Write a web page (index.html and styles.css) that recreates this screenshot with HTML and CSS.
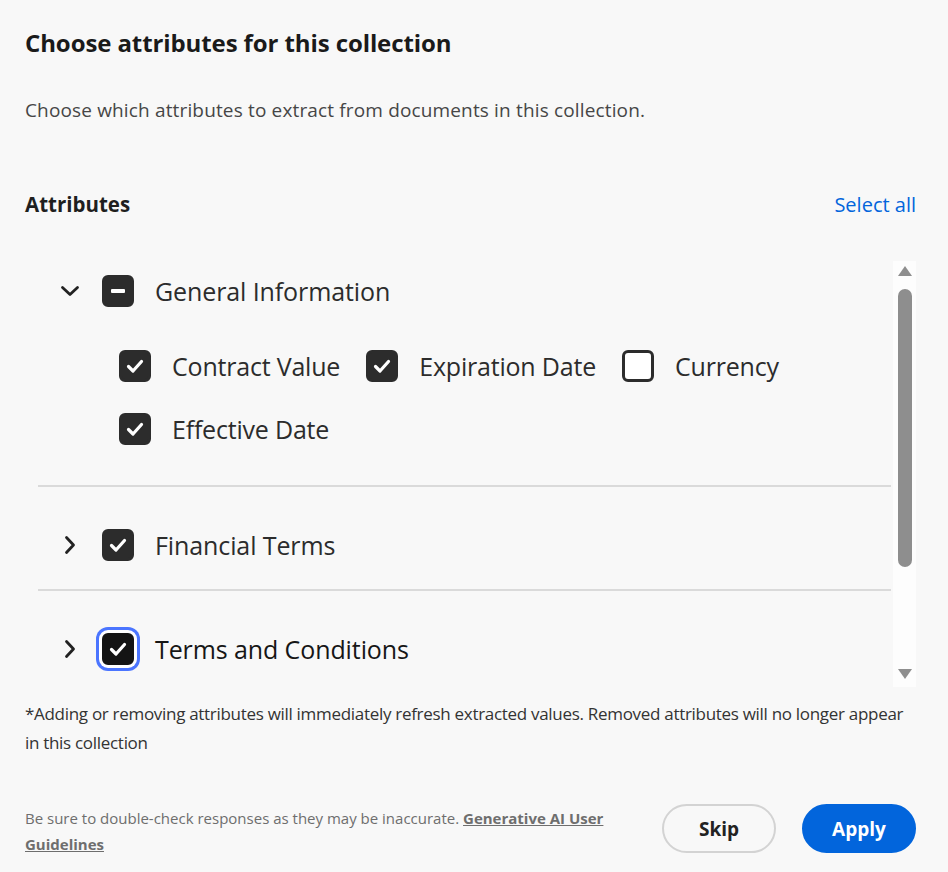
FILE: index.html
```html
<!DOCTYPE html>
<html lang="en">
<head>
  <meta charset="UTF-8">
  <meta name="viewport" content="width=device-width, initial-scale=1.0">
  <title>Choose attributes</title>
  <link rel="stylesheet" href="styles.css">
</head>
<body>
  <main class="dialog">
    <h1 class="dialog-title">Choose attributes for this collection</h1>
    <p class="dialog-desc">Choose which attributes to extract from documents in this collection.</p>

    <div class="attr-head">
      <h2>Attributes</h2>
      <a class="select-all" href="#">Select all</a>
    </div>

    <div class="attr-box">
      <div class="attr-list">
        <section class="group open">
          <div class="group-head">
            <span class="chevron">
              <svg viewBox="0 0 20 20" width="20" height="20"><path d="M2.5 6.5 L10 13.5 L17.5 6.5" /></svg>
            </span>
            <span class="check mixed"><i></i></span>
            <span class="group-name">General Information</span>
          </div>
          <div class="group-items">
            <label class="item"><span class="check on"><svg viewBox="0 0 32 32"><path d="M9.5 16.5 L14 21 L22.5 11.5" /></svg></span>Contract Value</label>
            <label class="item"><span class="check on"><svg viewBox="0 0 32 32"><path d="M9.5 16.5 L14 21 L22.5 11.5" /></svg></span>Expiration Date</label>
            <label class="item"><span class="check"></span>Currency</label>
            <label class="item"><span class="check on"><svg viewBox="0 0 32 32"><path d="M9.5 16.5 L14 21 L22.5 11.5" /></svg></span>Effective Date</label>
          </div>
        </section>
        <section class="group">
          <div class="group-head">
            <span class="chevron">
              <svg viewBox="0 0 20 20" width="20" height="20"><path d="M6.5 2.5 L13.5 10 L6.5 17.5" /></svg>
            </span>
            <span class="check on"><svg viewBox="0 0 32 32"><path d="M9.5 16.5 L14 21 L22.5 11.5" /></svg></span>
            <span class="group-name">Financial Terms</span>
          </div>
        </section>
        <section class="group">
          <div class="group-head">
            <span class="chevron">
              <svg viewBox="0 0 20 20" width="20" height="20"><path d="M6.5 2.5 L13.5 10 L6.5 17.5" /></svg>
            </span>
            <span class="check on focus"><svg viewBox="0 0 32 32"><path d="M9.5 16.5 L14 21 L22.5 11.5" /></svg></span>
            <span class="group-name dark">Terms and Conditions</span>
          </div>
        </section>
      </div>
      <div class="scrollbar">
        <span class="arrow up"></span>
        <span class="track"><span class="thumb"></span></span>
        <span class="arrow down"></span>
      </div>
    </div>

    <p class="note">*Adding or removing attributes will immediately refresh extracted values. Removed attributes will no longer appear in this collection</p>

    <footer class="dialog-foot">
      <p class="disclaimer">Be sure to double-check responses as they may be inaccurate. <a href="#">Generative AI User Guidelines</a></p>
      <div class="buttons">
        <button class="btn btn-secondary">Skip</button>
        <button class="btn btn-primary">Apply</button>
      </div>
    </footer>
  </main>
</body>
</html>
```

FILE: styles.css
```css
html, body {
  margin: 0;
  background: #f8f8f8;
}
body {
  font-family: "Open Sans", "Noto Sans", sans-serif;
  color: #222;
}
.dialog {
  padding: 27px 32px 0 25px;
}
.dialog-title {
  margin: 0;
  font-size: 24px;
  line-height: 32px;
  font-weight: 700;
  color: #1a1a1a;
  letter-spacing: -0.1px;
}
.dialog-desc {
  margin: 38px 0 0;
  font-size: 19px;
  line-height: 26px;
  color: #464646;
  letter-spacing: 0.15px;
}
.attr-head {
  display: flex;
  justify-content: space-between;
  align-items: center;
  margin-top: 66px;
  height: 30px;
}
.attr-head h2 {
  margin: 0;
  font-size: 20.5px;
  font-weight: 700;
  color: #1f1f1f;
}
.select-all {
  color: #0265dc;
  text-decoration: none;
  font-size: 20px;
}

/* list with its own scrollbar */
.attr-box {
  display: flex;
  height: 426px;
  margin-top: 42px;
  overflow: hidden;
}
.attr-list {
  flex: 1;
  padding-left: 13px;
}
.group {
  padding: 28px 0 14px;
  border-bottom: 2px solid #dadada;
}
.group:first-child {
  padding-top: 0;
}
.group:last-child {
  border-bottom: 0;
}
.group-head {
  display: flex;
  align-items: center;
  height: 60px;
  padding-left: 22px;
}
.chevron {
  display: flex;
  width: 20px;
  height: 20px;
  margin-right: 22px;
}
.chevron path {
  fill: none;
  stroke: #222;
  stroke-width: 2.8;
  stroke-linecap: round;
  stroke-linejoin: round;
}
.group-name {
  margin-left: 21px;
  font-size: 25px;
  letter-spacing: -0.1px;
  color: #2c2c2c;
}
.group-name.dark {
  color: #161616;
}
.group-items {
  display: flex;
  flex-wrap: wrap;
  gap: 19px 26px;
  padding: 23px 0 20px 81px;
}
.item {
  display: flex;
  align-items: center;
  height: 44px;
  font-size: 25px;
  letter-spacing: -0.2px;
  color: #2c2c2c;
}
.item .check {
  margin-right: 21px;
}

.check {
  display: flex;
  align-items: center;
  justify-content: center;
  box-sizing: border-box;
  width: 32px;
  height: 32px;
  flex-shrink: 0;
  border: 3px solid #2c2c2c;
  border-radius: 6px;
  background: #fff;
}
.check.on,
.check.mixed {
  background: #2c2c2c;
}
.check svg {
  width: 32px;
  height: 32px;
  flex-shrink: 0;
}
.check path {
  fill: none;
  stroke: #fff;
  stroke-width: 3.2;
  stroke-linecap: round;
  stroke-linejoin: round;
}
.check.mixed i {
  display: block;
  width: 14px;
  height: 4px;
  border-radius: 1px;
  background: #fff;
}
.check.focus {
  background: #141414;
  border-color: #141414;
  box-shadow: 0 0 0 3px #fff, 0 0 0 6px #4b75ff;
}

.scrollbar {
  display: flex;
  flex-direction: column;
  align-items: center;
  width: 23px;
  margin-left: 2px;
  background: #fdfdfd;
}
.arrow {
  width: 0;
  height: 0;
  border-left: 7px solid transparent;
  border-right: 7px solid transparent;
}
.arrow.up {
  margin-top: 5px;
  border-bottom: 10px solid #8e8e8e;
}
.arrow.down {
  margin-bottom: 8px;
  border-top: 10px solid #8e8e8e;
}
.track {
  flex: 1;
  width: 14px;
  padding-top: 13px;
}
.thumb {
  display: block;
  height: 278px;
  border-radius: 7px;
  background: #8e8e8e;
}

.note {
  margin: 12px 0 0;
  max-height: 51px;
  overflow: hidden;
  font-size: 17px;
  line-height: 29px;
  color: #333;
  letter-spacing: -0.3px;
}

.dialog-foot {
  display: flex;
  align-items: flex-start;
  justify-content: space-between;
  margin-top: 54px;
}
.disclaimer {
  margin: 0;
  padding-top: 1px;
  max-width: 610px;
  font-size: 15px;
  line-height: 26px;
  color: #6e6e6e;
}
.disclaimer a {
  color: #6e6e6e;
  font-weight: 700;
}
.buttons {
  display: flex;
  gap: 26px;
}
.btn {
  height: 49px;
  min-width: 114px;
  padding: 0 24px;
  border-radius: 25px;
  font-family: inherit;
  font-size: 19px;
  font-weight: 700;
}
.btn-secondary {
  background: #f8f8f8;
  border: 2px solid #d3d3d3;
  color: #222;
}
.btn-primary {
  background: #0265dc;
  border: 2px solid #0265dc;
  color: #fff;
}
```
